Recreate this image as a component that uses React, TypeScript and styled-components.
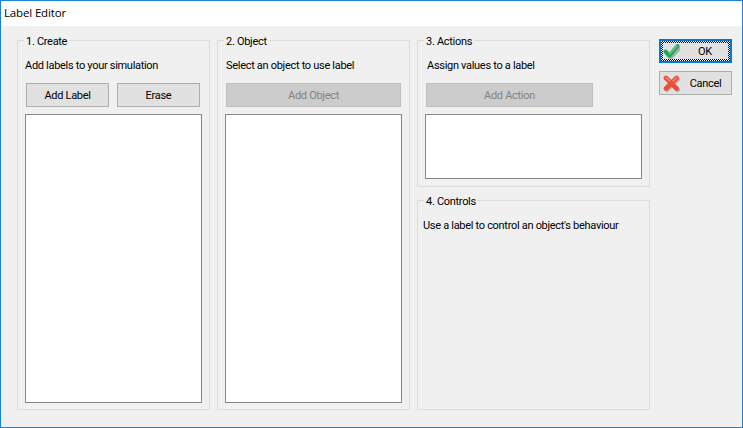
import styled, { createGlobalStyle } from "styled-components";

const Global = createGlobalStyle`
  html, body {
    margin: 0;
    padding: 0;
    background: #f0f0f0;
  }
`;

const Window = styled.div`
  box-sizing: border-box;
  display: flex;
  flex-direction: column;
  width: 743px;
  height: 428px;
  border: 1px solid #1883d7;
  font-family: Roboto, "Liberation Sans", sans-serif;
  font-size: 11px;
  letter-spacing: -0.3px;
  color: #000;
  background: #f0f0f0;
  overflow: hidden;
`;

const TitleBar = styled.div`
  flex: none;
  height: 25px;
  padding-left: 3px;
  line-height: 24px;
  font-family: "Open Sans", sans-serif;
  font-size: 11.5px;
  letter-spacing: -0.15px;
  background: #fff;
`;

const Body = styled.div`
  flex: 1;
  display: flex;
  gap: 7px;
  padding: 9px 10px 17px 16px;
`;

const Column = styled.div<{ $width: number }>`
  display: flex;
  flex-direction: column;
  justify-content: space-between;
  flex: none;
  width: ${(p) => p.$width}px;
`;

const Group = styled.fieldset<{ $height?: number }>`
  box-sizing: border-box;
  flex: ${(p) => (p.$height ? "none" : "1")};
  height: ${(p) => (p.$height ? `${p.$height}px` : "auto")};
  min-width: 0;
  margin: 0;
  padding: 8px 7px 6px 7px;
  border: 1px solid #dcdcdc;
  display: flex;
  flex-direction: column;
`;

const Legend = styled.legend`
  margin-left: -1px;
  padding: 0 2px;
  height: 10px;
  line-height: 13px;
`;

const Hint = styled.div<{ $indent?: number }>`
  height: 14px;
  line-height: 16px;
  margin-top: 5px;
  margin-left: ${(p) => p.$indent ?? 0}px;
  white-space: nowrap;
`;

const ButtonRow = styled.div`
  display: flex;
  gap: 8px;
  margin: 11px 0 7px 1px;
`;

const Btn = styled.div<{ $width: number; $disabled?: boolean }>`
  box-sizing: border-box;
  flex: none;
  width: ${(p) => p.$width}px;
  height: 24px;
  display: flex;
  align-items: center;
  justify-content: center;
  border: 1px solid ${(p) => (p.$disabled ? "#bfbfbf" : "#adadad")};
  background: ${(p) => (p.$disabled ? "#cccccc" : "#e1e1e1")};
  color: ${(p) => (p.$disabled ? "#838383" : "#000")};
`;

const ListBox = styled.div<{ $height?: number }>`
  box-sizing: border-box;
  flex: ${(p) => (p.$height ? "none" : "1")};
  height: ${(p) => (p.$height ? `${p.$height}px` : "auto")};
  background: #fff;
  border: 1px solid #828790;
`;

const Side = styled.div`
  flex: none;
  width: 73px;
  margin-left: 2px;
  margin-top: 4px;
  display: flex;
  flex-direction: column;
  gap: 8px;
`;

const DialogButton = styled.div<{ $focused?: boolean }>`
  box-sizing: border-box;
  position: relative;
  height: 24px;
  display: flex;
  align-items: center;
  padding-left: ${(p) => (p.$focused ? 2 : 3)}px;
  background: #e1e1e1;
  border: ${(p) => (p.$focused ? "2px solid #0078d7" : "1px solid #adadad")};

  ${(p) =>
    p.$focused
      ? `&::after {
          content: "";
          position: absolute;
          inset: 0;
          padding: 2px;
          background: repeating-conic-gradient(#000 0 25%, #fff 0 50%) 0 0 / 2px 2px;
          -webkit-mask: linear-gradient(#000 0 0) content-box, linear-gradient(#000 0 0);
          -webkit-mask-composite: xor;
          mask-composite: exclude;
        }`
      : ""}
`;

const DialogLabel = styled.span`
  flex: 1;
  text-align: center;
`;

function CheckIcon() {
  return (
    <svg width="17" height="17" viewBox="0 0 17 17">
      <path d="M3 9.5 L7 13.5 L15 4.5" fill="none" stroke="#8a9a90" strokeWidth="4" strokeLinecap="round" strokeLinejoin="round" opacity="0.7" transform="translate(0.8 1)" />
      <path d="M2.5 8.5 L6.5 12.5 L14.5 3" fill="none" stroke="#25a55c" strokeWidth="4" strokeLinecap="round" strokeLinejoin="round" />
      <path d="M6.5 11 L13.8 3" fill="none" stroke="#5fd48a" strokeWidth="1.2" strokeLinecap="round" />
    </svg>
  );
}

function CrossIcon() {
  return (
    <svg width="17" height="17" viewBox="0 0 17 17">
      <path d="M3.5 3.5 L14 14 M14 3.5 L3.5 14" fill="none" stroke="#9a8a88" strokeWidth="4.6" strokeLinecap="round" opacity="0.6" transform="translate(0.7 0.7)" />
      <path d="M3 3 L13.5 13.5 M13.5 3 L3 13.5" fill="none" stroke="#e8503a" strokeWidth="4.6" strokeLinecap="round" />
      <path d="M3 2.6 L6.5 6 M13.4 2.6 L10 6" fill="none" stroke="#f59a85" strokeWidth="1.1" strokeLinecap="round" />
    </svg>
  );
}

export default function App() {
  return (
    <Window>
      <Global />
      <TitleBar>Label Editor</TitleBar>
      <Body>
        <Column $width={193}>
          <Group>
            <Legend>1. Create</Legend>
            <Hint>Add labels to your simulation</Hint>
            <ButtonRow>
              <Btn $width={83}>Add Label</Btn>
              <Btn $width={83}>Erase</Btn>
            </ButtonRow>
            <ListBox />
          </Group>
        </Column>
        <Column $width={193}>
          <Group>
            <Legend>2. Object</Legend>
            <Hint $indent={1}>Select an object to use label</Hint>
            <ButtonRow>
              <Btn $disabled $width={175}>Add Object</Btn>
            </ButtonRow>
            <ListBox />
          </Group>
        </Column>
        <Column $width={233}>
          <Group $height={152}>
            <Legend>3. Actions</Legend>
            <Hint $indent={2}>Assign values to a label</Hint>
            <ButtonRow>
              <Btn $disabled $width={167}>Add Action</Btn>
            </ButtonRow>
            <ListBox $height={65} />
          </Group>
          <Group $height={215}>
            <Legend>4. Controls</Legend>
            <Hint $indent={-2}>Use a label to control an object's behaviour</Hint>
          </Group>
        </Column>
        <Side>
          <DialogButton $focused>
            <CheckIcon />
            <DialogLabel>OK</DialogLabel>
          </DialogButton>
          <DialogButton>
            <CrossIcon />
            <DialogLabel>Cancel</DialogLabel>
          </DialogButton>
        </Side>
      </Body>
    </Window>
  );
}
